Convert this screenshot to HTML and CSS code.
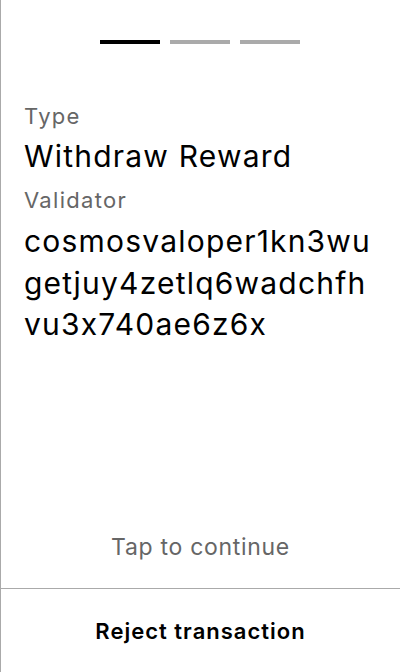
FILE: index.html
```html
<!DOCTYPE html>
<html>
<head>
<meta charset="utf-8">
<link rel="stylesheet" href="styles.css">
</head>
<body>
<div class="screen">
  <div class="main">
    <div class="progress">
      <span class="seg active"></span>
      <span class="seg"></span>
      <span class="seg"></span>
    </div>
    <div class="fields">
      <div class="label">Type</div>
      <div class="value">Withdraw Reward</div>
      <div class="label">Validator</div>
      <div class="value addr">cosmosvaloper1kn3wugetjuy4zetlq6wadchfhvu3x740ae6z6x</div>
    </div>
    <div class="tap">Tap to continue</div>
  </div>
  <div class="reject">Reject transaction</div>
</div>
</body>
</html>
```
FILE: styles.css
```css
html, body {
  margin: 0;
  padding: 0;
  background: #fff;
}
body {
  font-family: Inter, "Noto Sans", sans-serif;
  font-feature-settings: "calt" 0;
  color: #000;
}
.screen {
  width: 400px;
  height: 672px;
  box-sizing: border-box;
  border-left: 1px solid #aaa;
  display: flex;
  flex-direction: column;
}
.main {
  flex: 1;
  display: flex;
  flex-direction: column;
  border-bottom: 1px solid #aaa;
}
.progress {
  display: flex;
  justify-content: center;
  gap: 10px;
  padding-top: 40px;
  margin-left: -1px;
}
.seg {
  width: 60px;
  height: 4px;
  background: #aaa;
}
.seg.active {
  background: #000;
}
.fields {
  padding: 53px 23px 0;
}
.label {
  font-size: 22px;
  line-height: 38px;
  letter-spacing: 1.3px;
  color: #666;
}
.value {
  font-size: 30px;
  line-height: 42px;
  letter-spacing: 1.2px;
  margin-bottom: 4px;
}
.addr {
  word-break: break-all;
  line-height: 41.5px;
  margin-top: 2px;
}
.tap {
  margin-top: auto;
  text-align: center;
  font-size: 23px;
  line-height: 30px;
  letter-spacing: 0.7px;
  color: #666;
  padding-bottom: 26px;
}
.reject {
  height: 83px;
  display: flex;
  align-items: center;
  justify-content: center;
  font-size: 22px;
  line-height: 30px;
  letter-spacing: 1px;
  font-weight: 600;
}
```
